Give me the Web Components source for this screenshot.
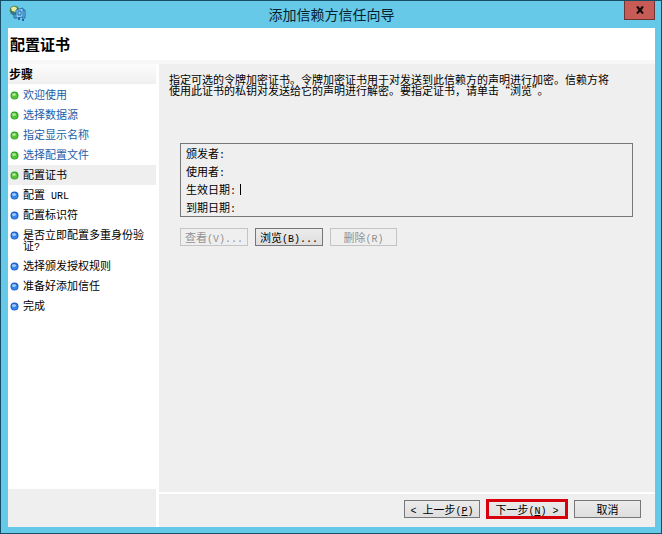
<!DOCTYPE html>
<html lang="zh-CN">
<head>
<meta charset="utf-8">
<title>添加信赖方信任向导</title>
<style>
    body {
        margin: 0;
        font: 11px/11px "Noto Sans CJK SC", sans-serif;
        color: #000;
    }
</style>
</head>
<body>
<wizard-window caption="添加信赖方信任向导">
    <wizard-header slot="header">配置证书</wizard-header>

    <step-list slot="steps" heading="步骤">
        <step-item state="done">欢迎使用</step-item>
        <step-item state="done">选择数据源</step-item>
        <step-item state="done">指定显示名称</step-item>
        <step-item state="done">选择配置文件</step-item>
        <step-item state="current">配置证书</step-item>
        <step-item>配置<half-text> URL</half-text></step-item>
        <step-item>配置标识符</step-item>
        <step-item>是否立即配置多重身份验证<half-text>?</half-text></step-item>
        <step-item>选择颁发授权规则</step-item>
        <step-item>准备好添加信任</step-item>
        <step-item>完成</step-item>
    </step-list>

    <certificate-page></certificate-page>

    <wizard-button slot="footer" wide><half-text>&lt; </half-text>上一步<half-text>(<u>P</u>)</half-text></wizard-button>
    <wizard-button slot="footer" wide marked>下一步<half-text>(<u>N</u>) &gt;</half-text></wizard-button>
    <wizard-button slot="footer">取消</wizard-button>
</wizard-window>

<script>
// Latin text at about half the width of a Chinese character
class HalfText extends HTMLElement {
    constructor() {
        super();
        this.attachShadow({ mode: 'open' });
        // no whitespace around the slot, it would be kept by white-space: pre
        this.shadowRoot.innerHTML = '<style>:host { display: inline; font-family: "Liberation Mono", monospace; font-size: 10px; line-height: 1px; white-space: pre; }</style><slot></slot>';
    }
}
customElements.define('half-text', HalfText);

class WizardButton extends HTMLElement {
    constructor() {
        super();
        this.attachShadow({ mode: 'open' });
        this.shadowRoot.innerHTML = `
            <style>
                :host { display: block; }
                :host([marked]) { outline: 3px solid #d9000d; outline-offset: -2px; }
                button {
                    display: block; box-sizing: border-box;
                    min-width: 67px; height: 18px; padding: 0 4px;
                    font: inherit; line-height: 16px; color: #000; white-space: nowrap;
                    background: linear-gradient(#ececec, #dedede);
                    border: 1px solid #777;
                }
                :host([wide]) button { min-width: 76px; }
                :host([marked]) button { min-width: 80px; border-color: #d9000d; }
                button:disabled { color: #929292; background: #efefef; border-color: #c4c4c4; }
            </style>
            <button type="button"><slot></slot></button>
        `;
    }

    connectedCallback() {
        this.shadowRoot.querySelector('button').disabled = this.hasAttribute('disabled');
    }
}
customElements.define('wizard-button', WizardButton);

class WizardHeader extends HTMLElement {
    constructor() {
        super();
        this.attachShadow({ mode: 'open' });
        this.shadowRoot.innerHTML = `
            <style>
                :host { display: block; background: #fff; border-bottom: 4px solid #f7f7f7; }
                h1 { margin: 0; padding: 6px 2px; font-size: 15px; line-height: 20px; font-weight: bold; }
            </style>
            <h1><slot></slot></h1>
        `;
    }
}
customElements.define('wizard-header', WizardHeader);

class StepItem extends HTMLElement {
    constructor() {
        super();
        this.attachShadow({ mode: 'open' });
    }

    connectedCallback() {
        const state = this.getAttribute('state');
        const green = state === 'done' || state === 'current';
        const label = state === 'done' ? '<a href="#"><slot></slot></a>' : '<span><slot></slot></span>';
        this.setAttribute('role', 'listitem');
        this.shadowRoot.innerHTML = `
            <style>
                :host { display: flex; align-items: flex-start; gap: 4px; padding: 4px 8px 5px 2px; }
                :host([state="current"]) { background: #efefef; }
                svg { flex: none; width: 9px; height: 9px; margin-top: 2px; }
                a { color: #1b5da8; text-decoration: none; }
            </style>
            <svg viewBox="0 0 9 9" aria-hidden="true">
                <circle cx="4.5" cy="4.5" r="4" fill="${green ? '#36a32b' : '#1f62c4'}"/>
                <circle cx="4.5" cy="4.8" r="2.9" fill="${green ? '#55c43c' : '#3987ea'}"/>
                <ellipse cx="4" cy="3.6" rx="2" ry="1.3" fill="${green ? '#b3ea98' : '#a5d0ff'}"/>
            </svg>
            ${label}
        `;
    }
}
customElements.define('step-item', StepItem);

class StepList extends HTMLElement {
    constructor() {
        super();
        this.attachShadow({ mode: 'open' });
        this.shadowRoot.innerHTML = `
            <style>
                :host { display: block; background: #fff; }
                h2 {
                    margin: 0 0 1px; padding: 0 1px;
                    font-size: 12px; line-height: 20px; font-weight: bold;
                    background: linear-gradient(#fcfcfc, #efefef);
                }
            </style>
            <h2></h2>
            <div role="list"><slot></slot></div>
        `;
    }

    connectedCallback() {
        this.shadowRoot.querySelector('h2').textContent = this.getAttribute('heading');
    }
}
customElements.define('step-list', StepList);

class CertificatePage extends HTMLElement {
    constructor() {
        super();
        this.attachShadow({ mode: 'open' });
        this.shadowRoot.innerHTML = `
            <style>
                :host { display: block; padding: 10px 22px 10px 10px; }
                p { margin: 0 0 47px; white-space: nowrap; }
                .details, .actions { margin-left: 11px; }
                .details {
                    margin-top: 0; margin-bottom: 0;
                    padding: 0 5px;
                    border: 1px solid #777;
                }
                dt { line-height: 18px; }
                .caret { display: inline-block; width: 1px; height: 11px; margin-left: 4px; vertical-align: -1px; background: #000; }
                .actions { display: flex; gap: 7px; padding-top: 11px; }
            </style>
            <p>指定可选的令牌加密证书。令牌加密证书用于对发送到此信赖方的声明进行加密。信赖方将<br>使用此证书的私钥对发送给它的声明进行解密。要指定证书，请单击“浏览”。</p>
            <dl class="details">
                <dt>颁发者<half-text>:</half-text></dt>
                <dt>使用者<half-text>:</half-text></dt>
                <dt>生效日期<half-text>:</half-text><span class="caret"></span></dt>
                <dt>到期日期<half-text>:</half-text></dt>
            </dl>
            <div class="actions">
                <wizard-button disabled>查看<half-text>(V)...</half-text></wizard-button>
                <wizard-button>浏览<half-text>(B)...</half-text></wizard-button>
                <wizard-button disabled>删除<half-text>(R)</half-text></wizard-button>
            </div>
        `;
    }
}
customElements.define('certificate-page', CertificatePage);

class WizardWindow extends HTMLElement {
    constructor() {
        super();
        this.attachShadow({ mode: 'open' });
        this.shadowRoot.innerHTML = `
            <style>
                :host {
                    display: flex; flex-direction: column; box-sizing: border-box;
                    min-height: 100vh; padding: 0 6px 6px 7px;
                    background: #66c9e8; border: 1px solid #164e68;
                }
                .titlebar { display: grid; grid-template-columns: 1fr auto 1fr; height: 27px; }
                .logo { width: 17px; height: 17px; margin: 4px 0 0 1px; }
                .caption { font-size: 14px; line-height: 26px; color: #08222e; }
                .close {
                    justify-self: end; width: 31px; height: 19px; padding: 0;
                    background: #c75b55; border: 1px solid #6b3437; border-top: 0;
                }
                .close svg { display: block; margin: 0 auto; }
                .client { flex: 1; display: flex; flex-direction: column; background: #efefef; }
                .body { flex: 1; display: grid; grid-template-columns: 148px 1fr; column-gap: 3px; background: #fff; }
                .side, .main { display: flex; flex-direction: column; background: #efefef; }
                .side { padding-bottom: 38px; }
                .side ::slotted(*), .page { flex: 1; }
                footer {
                    display: flex; justify-content: flex-end; align-items: center; gap: 7px;
                    padding: 6px 14px 9px; border-top: 2px solid #fff;
                }
            </style>
            <div class="titlebar">
                <svg class="logo" viewBox="0 0 17 17" aria-hidden="true">
                    <circle cx="5.5" cy="5.5" r="4.8" fill="#547d45"/>
                    <path d="M2 3 Q5 0 8 3 L7 7 L3 6Z" fill="#e9ed97"/>
                    <path d="M1 6 L5 7 L7 10 L4 10Z" fill="#277aa7"/>
                    <path d="M7 5 L14 3 V12 L7 13Z" fill="#8dd4f4" stroke="#2471ae"/>
                    <path d="M9 6 H12 V10 H9Z M14 5 H16 V13 H13 M5 10 V13 H7" fill="none" stroke="#2567a6"/>
                    <path d="M9 14 H11 M13 15 H15" stroke="#2864a5" stroke-width="2"/>
                </svg>
                <span class="caption"></span>
                <button class="close" type="button" aria-label="关闭">
                    <svg width="10" height="8" viewBox="0 0 10 8" aria-hidden="true">
                        <path d="M2 0.5 L8 7.5 M8 0.5 L2 7.5" stroke="#16090a" stroke-width="2.2"/>
                    </svg>
                </button>
            </div>
            <div class="client">
                <slot name="header"></slot>
                <div class="body">
                    <div class="side"><slot name="steps"></slot></div>
                    <div class="main">
                        <div class="page"><slot></slot></div>
                        <footer><slot name="footer"></slot></footer>
                    </div>
                </div>
            </div>
        `;
    }

    connectedCallback() {
        this.shadowRoot.querySelector('.caption').textContent = this.getAttribute('caption');
    }
}
customElements.define('wizard-window', WizardWindow);
</script>
</body>
</html>
